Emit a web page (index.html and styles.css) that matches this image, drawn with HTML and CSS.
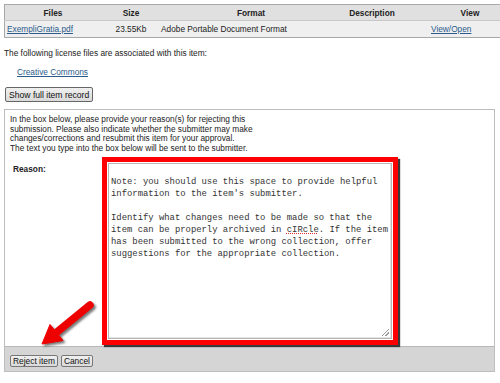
FILE: index.html
```html
<!DOCTYPE html>
<html>
<head>
<meta charset="utf-8">
<link rel="stylesheet" href="styles.css">
</head>
<body>
<table class="files">
  <thead>
    <tr>
      <th class="c-files">Files</th>
      <th class="c-size">Size</th>
      <th class="c-format">Format</th>
      <th class="c-desc">Description</th>
      <th class="c-view">View</th>
    </tr>
  </thead>
  <tbody>
    <tr>
      <td class="c-files"><a href="#">ExempliGratia.pdf</a></td>
      <td class="c-size">23.55Kb</td>
      <td class="c-format">Adobe Portable Document Format</td>
      <td class="c-desc"></td>
      <td class="c-view"><a href="#">View/Open</a></td>
    </tr>
  </tbody>
</table>

<p class="license-intro">The following license files are associated with this item:</p>
<ul class="license-list"><li><a href="#">Creative Commons</a></li></ul>

<button class="btn show-full" type="button">Show full item record</button>

<form class="reject-box">
  <div class="reject-body">
    <p class="instructions">In the box below, please provide your reason(s) for rejecting this<br>submission. Please also indicate whether the submitter may make<br>changes/corrections and resubmit this item for your approval.<br>The text you type into the box below will be sent to the submitter.</p>
    <div class="reason-row">
      <label class="reason-label">Reason:</label>
      <div class="highlight">
        <div class="reason-input">Note: you should use this space to provide helpful
information to the item's submitter.

Identify what changes need to be made so that the
item can be properly archived in <span class="misspelt">cIRcle</span>. If the item
has been submitted to the wrong collection, offer
suggestions for the appropriate collection.</div>
      </div>
    </div>
  </div>
  <div class="reject-footer">
    <button class="btn small" type="button">Reject item</button>
    <button class="btn small" type="button">Cancel</button>
  </div>
</form>

<svg class="arrow" width="72" height="58" viewBox="0 0 72 58">
  <defs>
    <filter id="blur" x="-20%" y="-20%" width="140%" height="140%">
      <feGaussianBlur stdDeviation="1"/>
    </filter>
  </defs>
  <g transform="translate(2,2)" fill="#333" stroke="#333" opacity="0.65" filter="url(#blur)">
    <line x1="60" y1="10" x2="27" y2="37" stroke-width="7.5" stroke-linecap="round"/>
    <polygon points="12,49 33,45.5 20,29.5" stroke-width="1" stroke-linejoin="round"/>
  </g>
  <g fill="#ee0000" stroke="#ee0000">
    <line x1="60" y1="10" x2="27" y2="37" stroke-width="7.5" stroke-linecap="round"/>
    <polygon points="12,49 33,45.5 20,29.5" stroke-width="1" stroke-linejoin="round"/>
  </g>
</svg>
</body>
</html>
```

FILE: styles.css
```css
html, body {
  margin: 0;
  padding: 0;
  background: #fff;
}

body {
  position: relative;
  width: 492px;
  padding: 4px;
  font-family: "Liberation Sans", Arial, sans-serif;
  font-size: 8.3px;
  color: #222;
}

a {
  color: #2b5b8c;
  text-decoration: underline;
}

/* Files table */
.files {
  width: 492px;
  border-collapse: collapse;
  border: 1px solid #a8a8a8;
  table-layout: fixed;
}

.files th {
  background: #e0e0e0;
  font-weight: bold;
  height: 15px;
  padding: 0;
  text-align: center;
  border-bottom: 1px solid #c8c8c8;
  color: #222;
}

.files td {
  background: #efefef;
  height: 16px;
  padding: 0;
}

.files .c-files { width: 96px; }
.files .c-size { width: 60px; }
.files .c-format { width: 180px; }
.files .c-desc { width: 62px; }
.files .c-view { width: 94px; }

.files td.c-files { padding-left: 2px; }
.files td.c-size { text-align: center; }
.files td.c-format { padding-left: 0; }
.files th.c-view { padding-left: 20px; }
.files td.c-view { padding-left: 28px; }

/* License */
.license-intro {
  margin: 10px 0 0;
  line-height: 10px;
}

.license-list {
  list-style: none;
  margin: 9px 0 0;
  padding: 0 0 0 13px;
  line-height: 10px;
}

/* Buttons */
.btn {
  font-family: "Liberation Sans", Arial, sans-serif;
  color: #111;
  background: linear-gradient(#f0f0f0, #dadada);
  border: 1px solid #666;
  border-radius: 2px;
  margin: 0;
}

.show-full {
  display: block;
  margin: 10px 0 0 1px;
  height: 15px;
  padding: 0 3px;
  font-size: 8.6px;
  line-height: 12px;
}

.small {
  height: 12px;
  padding: 0 2px;
  font-size: 8.4px;
  line-height: 10px;
  border-color: #777;
}

/* Reject box */
.reject-box {
  margin: 7px 0 0;
  width: 491px;
  box-sizing: border-box;
  border: 1px solid #bdbdbd;
}

.instructions {
  margin: 0;
  padding: 5px 0 0 5px;
  line-height: 9.5px;
  color: #222;
}

.reason-row {
  display: flex;
  align-items: flex-start;
  margin-top: 4px;
  padding-left: 8px;
}

.reason-label {
  width: 89px;
  margin-top: 7px;
  font-weight: bold;
  line-height: 10px;
}

.highlight {
  border: 5px solid #f00;
  padding: 1px;
  box-shadow: 2px 2px 1px #3a3a3a;
  background: #fff;
}

.reason-input {
  position: relative;
  box-sizing: border-box;
  width: 284px;
  height: 176px;
  border: 1px solid #b5b5b5;
  box-shadow: inset -1px -1px 0 #e4e4e4;
  padding: 12px 2px 0 2px;
  font-family: "Liberation Mono", "Courier New", monospace;
  font-size: 8.9px;
  line-height: 12px;
  white-space: pre;
  color: #333;
}

.reason-input::after {
  content: "";
  position: absolute;
  right: 2px;
  bottom: 2px;
  width: 7px;
  height: 7px;
  background:
    linear-gradient(135deg, transparent 45%, #999 45%, #999 55%, transparent 55%, transparent 70%, #999 70%, #999 80%, transparent 80%);
}

.misspelt {
  text-decoration: underline dotted #e03030;
  text-decoration-thickness: 1px;
}

.reject-footer {
  margin-top: 1px;
  background: #d5d5d5;
  border-top: 1px solid #b8b8b8;
  height: 25px;
  box-sizing: border-box;
  padding: 8px 0 0 5px;
  display: flex;
  gap: 3px;
  align-items: flex-start;
}

/* Annotation arrow */
.arrow {
  position: absolute;
  left: 30px;
  top: 295px;
}
```
